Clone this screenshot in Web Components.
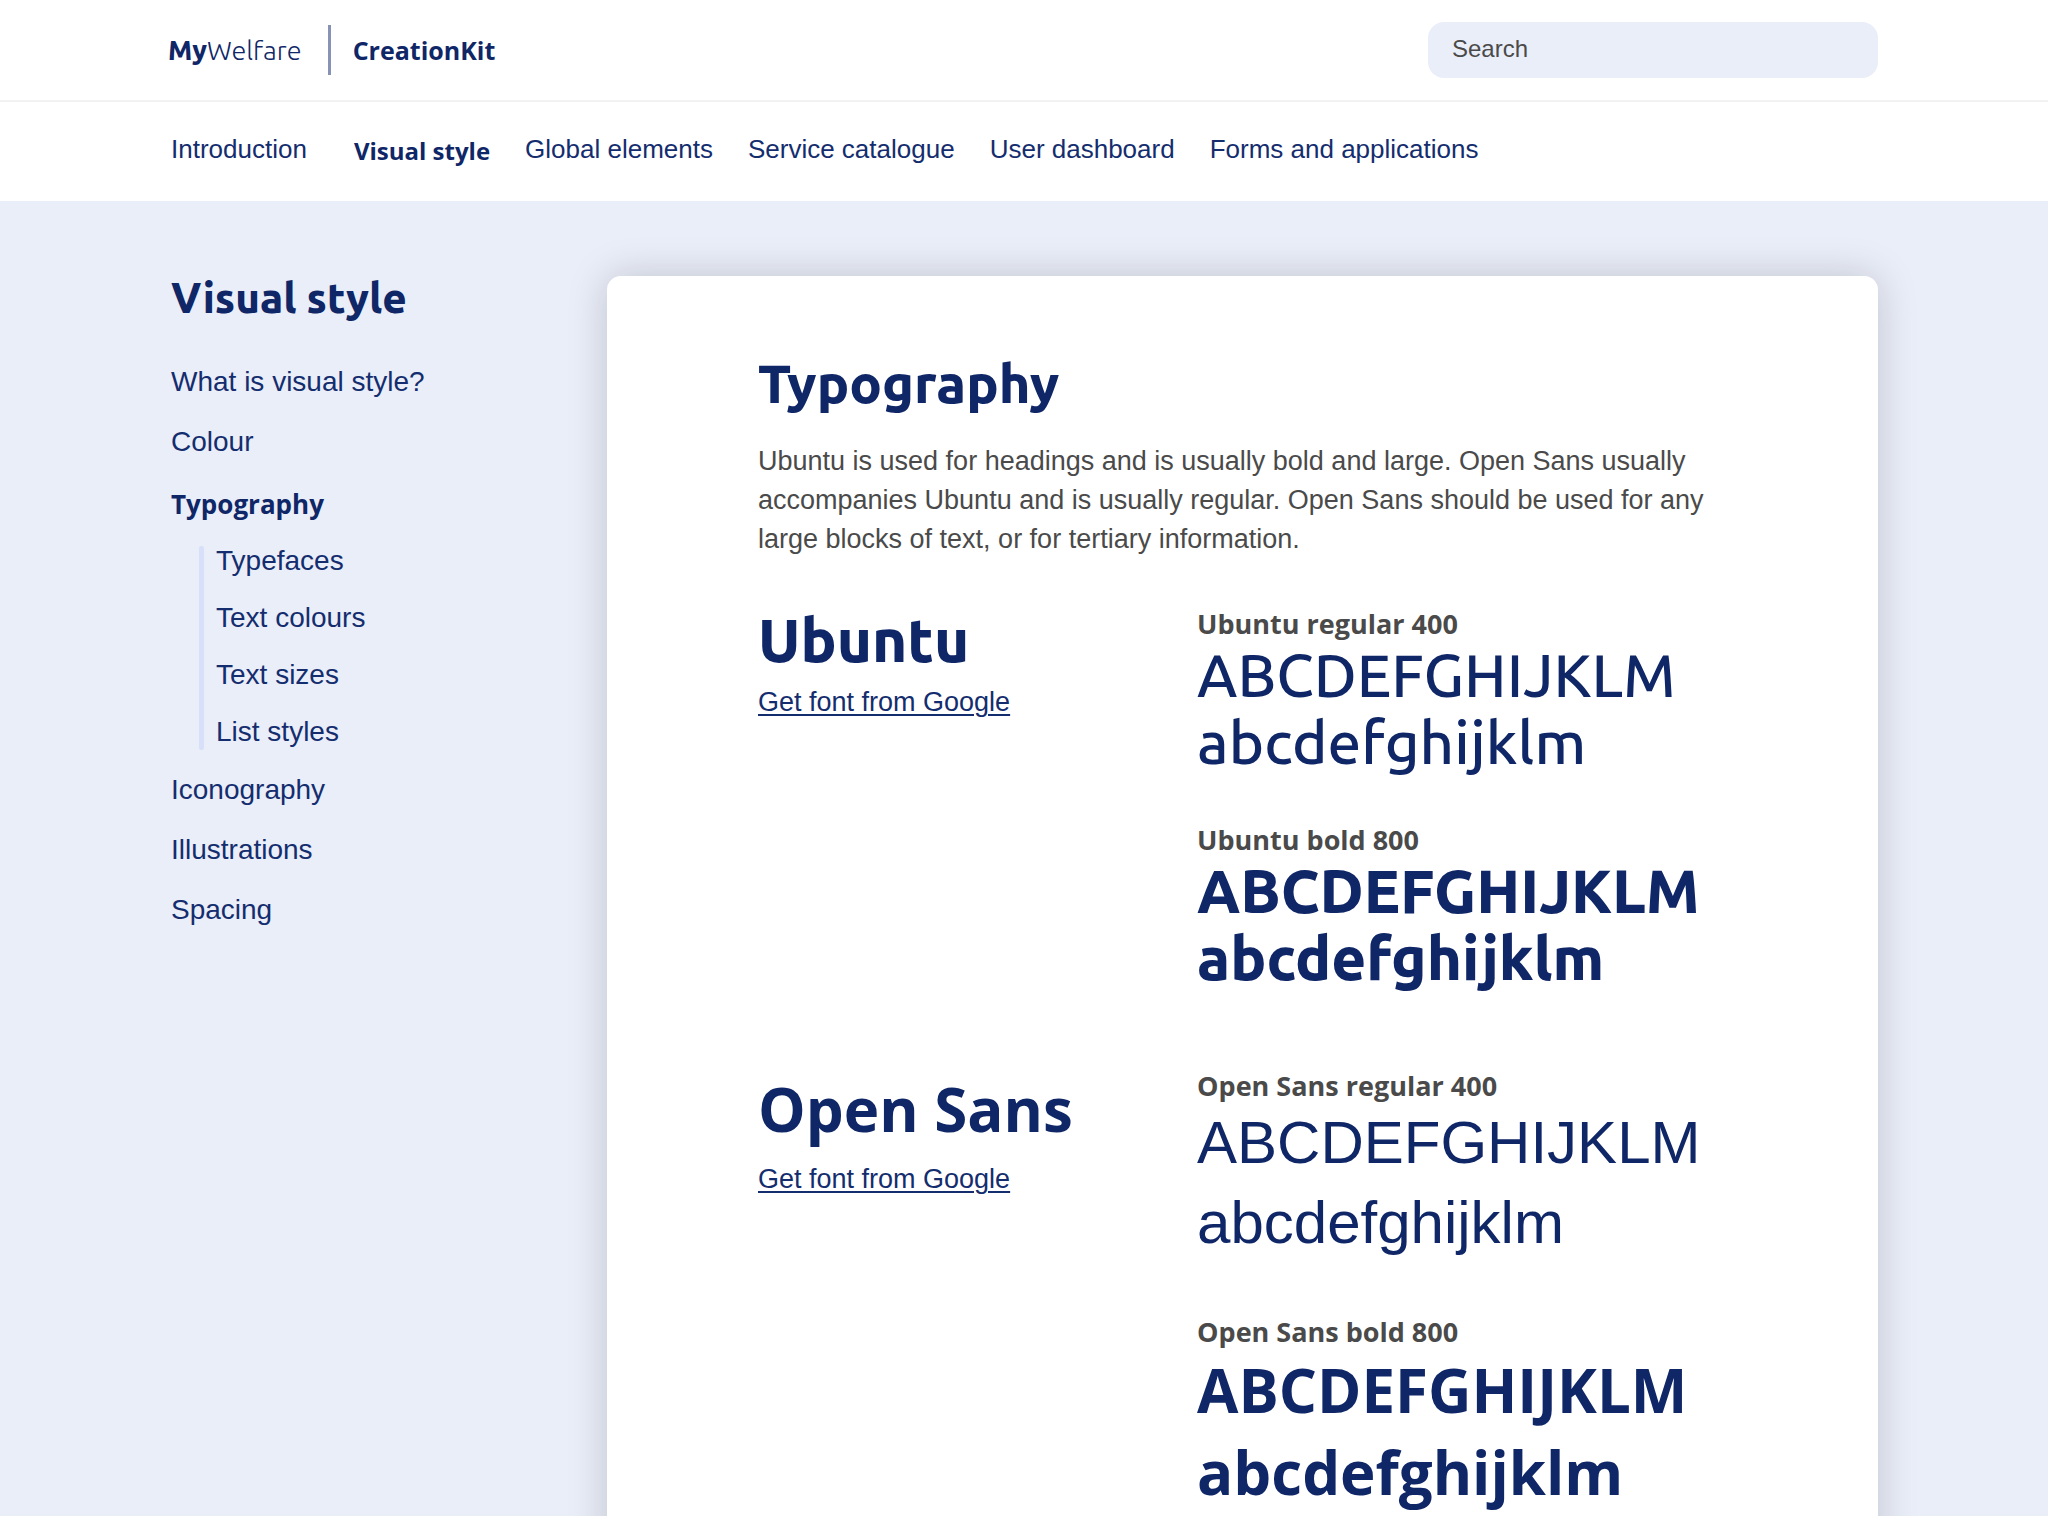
<!DOCTYPE html>
<html lang="en">
<head>
<meta charset="utf-8">
<meta name="viewport" content="width=device-width, initial-scale=1">
<title>Typography – MyWelfare CreationKit</title>
<style>
  :root {
    --navy: #0f2667;
    --link: #142d6e;
    --grey: #4a4a4a;
    --tint: #eaeef9;
    --rule: #d6e0f9;
    --gutter: 170px;
    --indent: 171px;
    --ubuntu: Ubuntu, "Open Sans", sans-serif;
    --open: "Open Sans", "Noto Sans", sans-serif;
    --text: "Liberation Sans", Arial, sans-serif;
  }
  body {
    margin: 0;
    background: var(--tint);
    color: var(--navy);
    font-family: var(--text);
  }
</style>
</head>
<body>
<ck-page>
  <ck-header slot="header"></ck-header>
  <ck-nav slot="nav" label="Sections">
    <ck-nav-item>Introduction</ck-nav-item>
    <ck-nav-item current>Visual style</ck-nav-item>
    <ck-nav-item>Global elements</ck-nav-item>
    <ck-nav-item>Service catalogue</ck-nav-item>
    <ck-nav-item>User dashboard</ck-nav-item>
    <ck-nav-item>Forms and applications</ck-nav-item>
  </ck-nav>
  <ck-sidebar slot="sidebar" heading="Visual style">
    <ck-side-item>What is visual style?</ck-side-item>
    <ck-side-item>Colour</ck-side-item>
    <ck-side-item current>Typography</ck-side-item>
    <ck-side-group>
      <ck-side-item>Typefaces</ck-side-item>
      <ck-side-item>Text colours</ck-side-item>
      <ck-side-item>Text sizes</ck-side-item>
      <ck-side-item>List styles</ck-side-item>
    </ck-side-group>
    <ck-side-item>Iconography</ck-side-item>
    <ck-side-item>Illustrations</ck-side-item>
    <ck-side-item>Spacing</ck-side-item>
  </ck-sidebar>
  <ck-article heading="Typography">
    <span slot="intro">Ubuntu is used for headings and is usually bold and large. Open Sans usually accompanies Ubuntu and is usually regular. Open Sans should be used for any large blocks of text, or for tertiary information.</span>
    <ck-typeface name="Ubuntu" family="ubuntu">
      <ck-specimen label="Ubuntu regular 400"></ck-specimen>
      <ck-specimen label="Ubuntu bold 800" bold></ck-specimen>
    </ck-typeface>
    <ck-typeface name="Open Sans" family="open">
      <ck-specimen label="Open Sans regular 400"></ck-specimen>
      <ck-specimen label="Open Sans bold 800" bold></ck-specimen>
    </ck-typeface>
  </ck-article>
</ck-page>

<script>
const define = (name, render) => customElements.define(name, class extends HTMLElement {
  connectedCallback() {
    if (this.shadowRoot) return;
    const template = document.createElement('template');
    template.innerHTML = render(this);
    this.attachShadow({ mode: 'open' }).append(template.content.cloneNode(true));
  }
});

define('ck-page', () => `
  <style>
    :host { display: flex; flex-direction: column; min-height: 100vh; }
    main {
      flex: 1;
      display: grid;
      grid-template-columns: 436px minmax(0, 1fr);
      padding: 75px var(--gutter) 0 var(--indent);
    }
  </style>
  <slot name="header"></slot>
  <slot name="nav"></slot>
  <main><slot name="sidebar"></slot><slot></slot></main>
`);

define('ck-header', () => `
  <style>
    :host { display: block; background: #fff; border-bottom: 2px solid #f2f2f2; }
    header {
      display: flex; align-items: center; justify-content: space-between;
      height: 100px; padding: 0 var(--gutter) 0 168px;
    }
    .brand { display: flex; align-items: center; color: var(--navy); text-decoration: none; }
    .logo { font: 300 27px/50px var(--ubuntu); }
    .logo b { font-weight: 800; }
    .kit {
      margin-left: 26px; padding-left: 22px;
      border-left: 3px solid #8793b5;
      font: 700 25px/50px var(--open);
    }
    input {
      box-sizing: border-box; width: 450px; height: 56px; margin: 0;
      padding: 0 24px 2px; border: 0; border-radius: 16px;
      background: var(--tint); color: var(--grey); font: 24px var(--text);
    }
    input::placeholder { color: var(--grey); opacity: 1; }
  </style>
  <header>
    <a class="brand" href="#home">
      <span class="logo"><b>My</b>Welfare</span>
      <span class="kit">CreationKit</span>
    </a>
    <input type="search" placeholder="Search" aria-label="Search">
  </header>
`);

define('ck-nav', el => `
  <style>
    :host { display: block; background: #fff; }
    nav { display: flex; align-items: flex-start; gap: 35px; padding: 17px var(--gutter) 20px var(--indent); }
  </style>
  <nav aria-label="${el.getAttribute('label')}"><slot></slot></nav>
`);

define('ck-nav-item', el => `
  <style>
    :host { display: block; }
    :host([current]) { padding: 2px 0 0 12px; }
    a { display: block; color: var(--link); font: 26px/60px var(--text); text-decoration: none; white-space: nowrap; }
    :host([current]) a { color: var(--navy); font: 700 24px/60px var(--open); }
  </style>
  <a href="#section"${el.hasAttribute('current') ? ' aria-current="page"' : ''}><slot></slot></a>
`);

define('ck-sidebar', el => `
  <style>
    :host { display: block; --row: 60px; }
    h2 { margin: 0 0 33px; font: 800 42px/43px var(--ubuntu); color: var(--navy); }
    nav { display: flex; flex-direction: column; }
  </style>
  <h2>${el.getAttribute('heading')}</h2>
  <nav aria-label="${el.getAttribute('heading')}"><slot></slot></nav>
`);

define('ck-side-group', () => `
  <style>
    :host { display: flex; gap: 12px; --row: 57px; }
    .bar { width: 5px; margin: 14px 0 10px 28px; border-radius: 2px; background: var(--rule); }
    .items { display: flex; flex-direction: column; }
  </style>
  <div class="bar"></div>
  <div class="items"><slot></slot></div>
`);

define('ck-side-item', el => `
  <style>
    :host { display: block; }
    a { display: block; color: var(--link); font: 28px/var(--row) var(--text); text-decoration: none; }
    :host([current]) a { padding-top: 4px; color: var(--navy); font: 700 26px/56px var(--open); }
  </style>
  <a href="#topic"${el.hasAttribute('current') ? ' aria-current="page"' : ''}><slot></slot></a>
`);

define('ck-article', el => `
  <style>
    :host {
      display: block; padding: 75px 151px;
      border-radius: 14px 14px 0 0; background: #fff;
      box-shadow: 0 0 40px rgba(0, 0, 0, .18);
    }
    h1 { margin: 0; font: 800 54px/64px var(--ubuntu); color: var(--navy); }
    p { margin: 27px 0 47px; font: 27px/39px var(--text); color: var(--grey); }
    .faces { display: flex; flex-direction: column; gap: 77px; }
  </style>
  <article>
    <h1>${el.getAttribute('heading')}</h1>
    <p><slot name="intro"></slot></p>
    <div class="faces"><slot></slot></div>
  </article>
`);

define('ck-typeface', el => `
  <style>
    :host {
      display: grid; grid-template-columns: minmax(0, 29fr) minmax(0, 35fr);
      --bold: 800 60px/67px var(--ubuntu);
      --regular: 500 60px/67px var(--ubuntu);
      --gap: 47px;
    }
    :host([family="open"]) {
      --bold: 700 60px/82px var(--open);
      --regular: 400 60px/80px var(--text);
      --gap: 51px;
    }
    h2 { margin: 0 0 10px; font: var(--bold); color: var(--navy); }
    a { font: 27px/39px var(--text); color: var(--link); text-underline-offset: 3px; text-decoration-thickness: 2px; }
    .specimens { display: flex; flex-direction: column; gap: var(--gap); }
  </style>
  <div>
    <h2>${el.getAttribute('name')}</h2>
    <a href="#google-fonts">Get font from Google</a>
  </div>
  <div class="specimens"><slot></slot></div>
`);

define('ck-specimen', el => `
  <style>
    :host { display: block; }
    h3 { margin: 0; font: 700 27px/35px var(--open); color: var(--grey); }
    p { margin: 0; font: var(--regular); color: var(--navy); }
    :host([bold]) p { font: var(--bold); }
  </style>
  <h3>${el.getAttribute('label')}</h3>
  <p>ABCDEFGHIJKLM</p>
  <p>abcdefghijklm</p>
`);
</script>
</body>
</html>
